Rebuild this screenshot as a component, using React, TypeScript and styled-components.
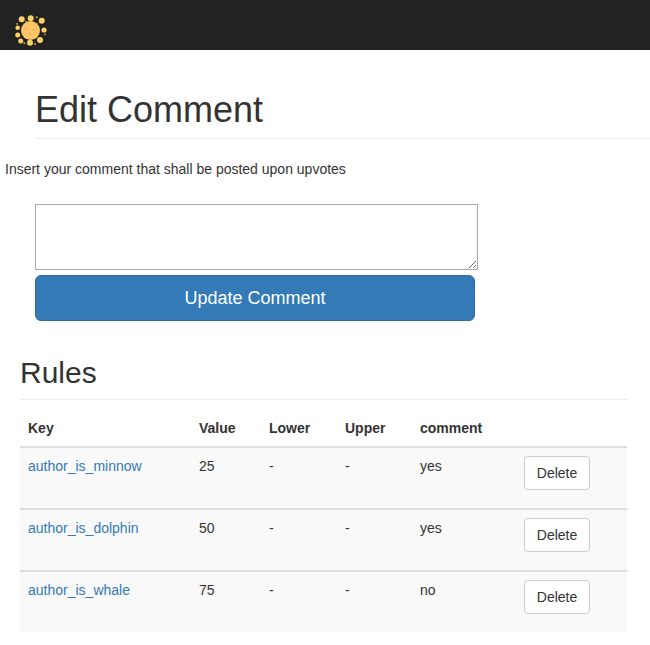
import React from "react";
import styled, { createGlobalStyle } from "styled-components";

const Global = createGlobalStyle`
  html, body { margin: 0; padding: 0; background: #fff; }
  body { font-family: "Liberation Sans", Arial, sans-serif; font-size: 14px; line-height: 20px; color: #333; overflow: hidden; }
  * { box-sizing: border-box; }
`;

const Navbar = styled.nav`
  height: 50px;
  background: #222;
  padding: 14px 0 0 14px;
`;
const Header = styled.div`
  margin: 40px 0 0 35px;
  padding-bottom: 8px;
  border-bottom: 1px solid #eee;
`;
const Title = styled.h1`
  margin: 0;
  font-size: 36px;
  font-weight: 500;
  line-height: 39.6px;
  color: #333;
`;
const Intro = styled.p`
  margin: 20px 0 0 5px;
  height: 20px;
`;
const Form = styled.form`
  margin: 25px 0 0 35px;
  display: flex;
  flex-direction: column;
  align-items: flex-start;
`;
const Area = styled.textarea`
  display: block;
  width: 443px;
  height: 66px;
  margin: 0;
  padding: 2px;
  border: 1px solid #a9a9a9;
  background: #fff;
  border-radius: 0;
`;
const Submit = styled.button`
  width: 440px;
  height: 46px;
  margin-top: 5px;
  background: #337ab7;
  border: 1px solid #2e6da4;
  border-radius: 6px;
  color: #fff;
  font: 18px/24px "Liberation Sans", Arial, sans-serif;
`;
const Section = styled.section`
  margin: 35px 22px 0 20px;
`;
const Subtitle = styled.h2`
  margin: 0;
  padding-bottom: 10px;
  border-bottom: 1px solid #eee;
  font-size: 30px;
  font-weight: 500;
  line-height: 33px;
  color: #333;
`;
const Table = styled.table`
  width: 607px;
  margin-top: 10px;
  border-collapse: separate;
  border-spacing: 0;
  table-layout: fixed;
`;
const Th = styled.th`
  padding: 8px;
  height: 37px;
  text-align: left;
  font-weight: 700;
  border-bottom: 2px solid #ddd;
  vertical-align: bottom;
`;
const Td = styled.td`
  padding: 8px;
  height: 62px;
  vertical-align: top;
  background: #f9f9f9;
  border-top: 2px solid #ddd;
`;
const FirstTd = styled(Td)`
  border-top: 0;
  height: 60px;
`;
const KeyLink = styled.a`
  color: #337ab7;
  text-decoration: none;
`;
const DeleteButton = styled.button`
  display: block;
  width: 66px;
  height: 34px;
  padding: 0;
  background: #fff;
  border: 1px solid #ccc;
  border-radius: 4px;
  color: #333;
  font: 14px/20px "Liberation Sans", Arial, sans-serif;
`;

const Logo = () => (
  <svg width="34" height="34" viewBox="0 0 34 34" aria-hidden="true" style={{ display: "block" }}>
    <circle cx="16.5" cy="16.5" r="9.5" fill="#fdc563" />
    {[
      [16.7, 4.3, 3], [27.7, 6.7, 3], [30, 16, 2.6], [26, 26, 3], [16, 28.7, 3],
      [6.7, 27, 2.5], [3.7, 21, 2.5], [3.7, 13.7, 2.3], [7.7, 5.3, 3],
    ].map(([cx, cy, r], i) => <circle key={i} cx={cx} cy={cy} r={r} fill="#fdd067" />)}
    {[
      [22.7, 3.3, 1], [31, 20.3, 0.9], [10.3, 29.3, 1], [21, 30, 1], [3, 9.8, 0.9], [12, 7.6, 0.9], [23.6, 10, 0.8],
    ].map(([cx, cy, r], i) => <circle key={i} cx={cx} cy={cy} r={r} fill="#d9a544" />)}
    <path d="M10.7 16q1.6-2 3.2 0M18.5 16q1.6-2 3.2 0M14.5 20q1.8 1.4 3.6 0" fill="none" stroke="#f19a8c" strokeWidth="0.8" />
  </svg>
);

const rows = [
  { key: "author_is_minnow", value: 25, comment: "yes" },
  { key: "author_is_dolphin", value: 50, comment: "yes" },
  { key: "author_is_whale", value: 75, comment: "no" },
];

export default function App() {
  return (
    <>
      <Global />
      <Navbar><Logo /></Navbar>
      <Header><Title>Edit Comment</Title></Header>
      <Intro>Insert your comment that shall be posted upon upvotes</Intro>
      <Form onSubmit={(e) => e.preventDefault()}>
        <Area />
        <Submit type="submit">Update Comment</Submit>
      </Form>
      <Section>
        <Subtitle>Rules</Subtitle>
        <Table>
          <colgroup>
            <col width="171" /><col width="70" /><col width="76" /><col width="75" /><col width="104" /><col width="111" />
          </colgroup>
          <thead>
            <tr><Th>Key</Th><Th>Value</Th><Th>Lower</Th><Th>Upper</Th><Th>comment</Th><Th /></tr>
          </thead>
          <tbody>
            {rows.map((r, i) => {
              const Cell = i === 0 ? FirstTd : Td;
              return (
                <tr key={r.key}>
                  <Cell><KeyLink href="#">{r.key}</KeyLink></Cell>
                  <Cell>{r.value}</Cell>
                  <Cell>-</Cell>
                  <Cell>-</Cell>
                  <Cell>{r.comment}</Cell>
                  <Cell><DeleteButton type="button">Delete</DeleteButton></Cell>
                </tr>
              );
            })}
          </tbody>
        </Table>
      </Section>
    </>
  );
}
